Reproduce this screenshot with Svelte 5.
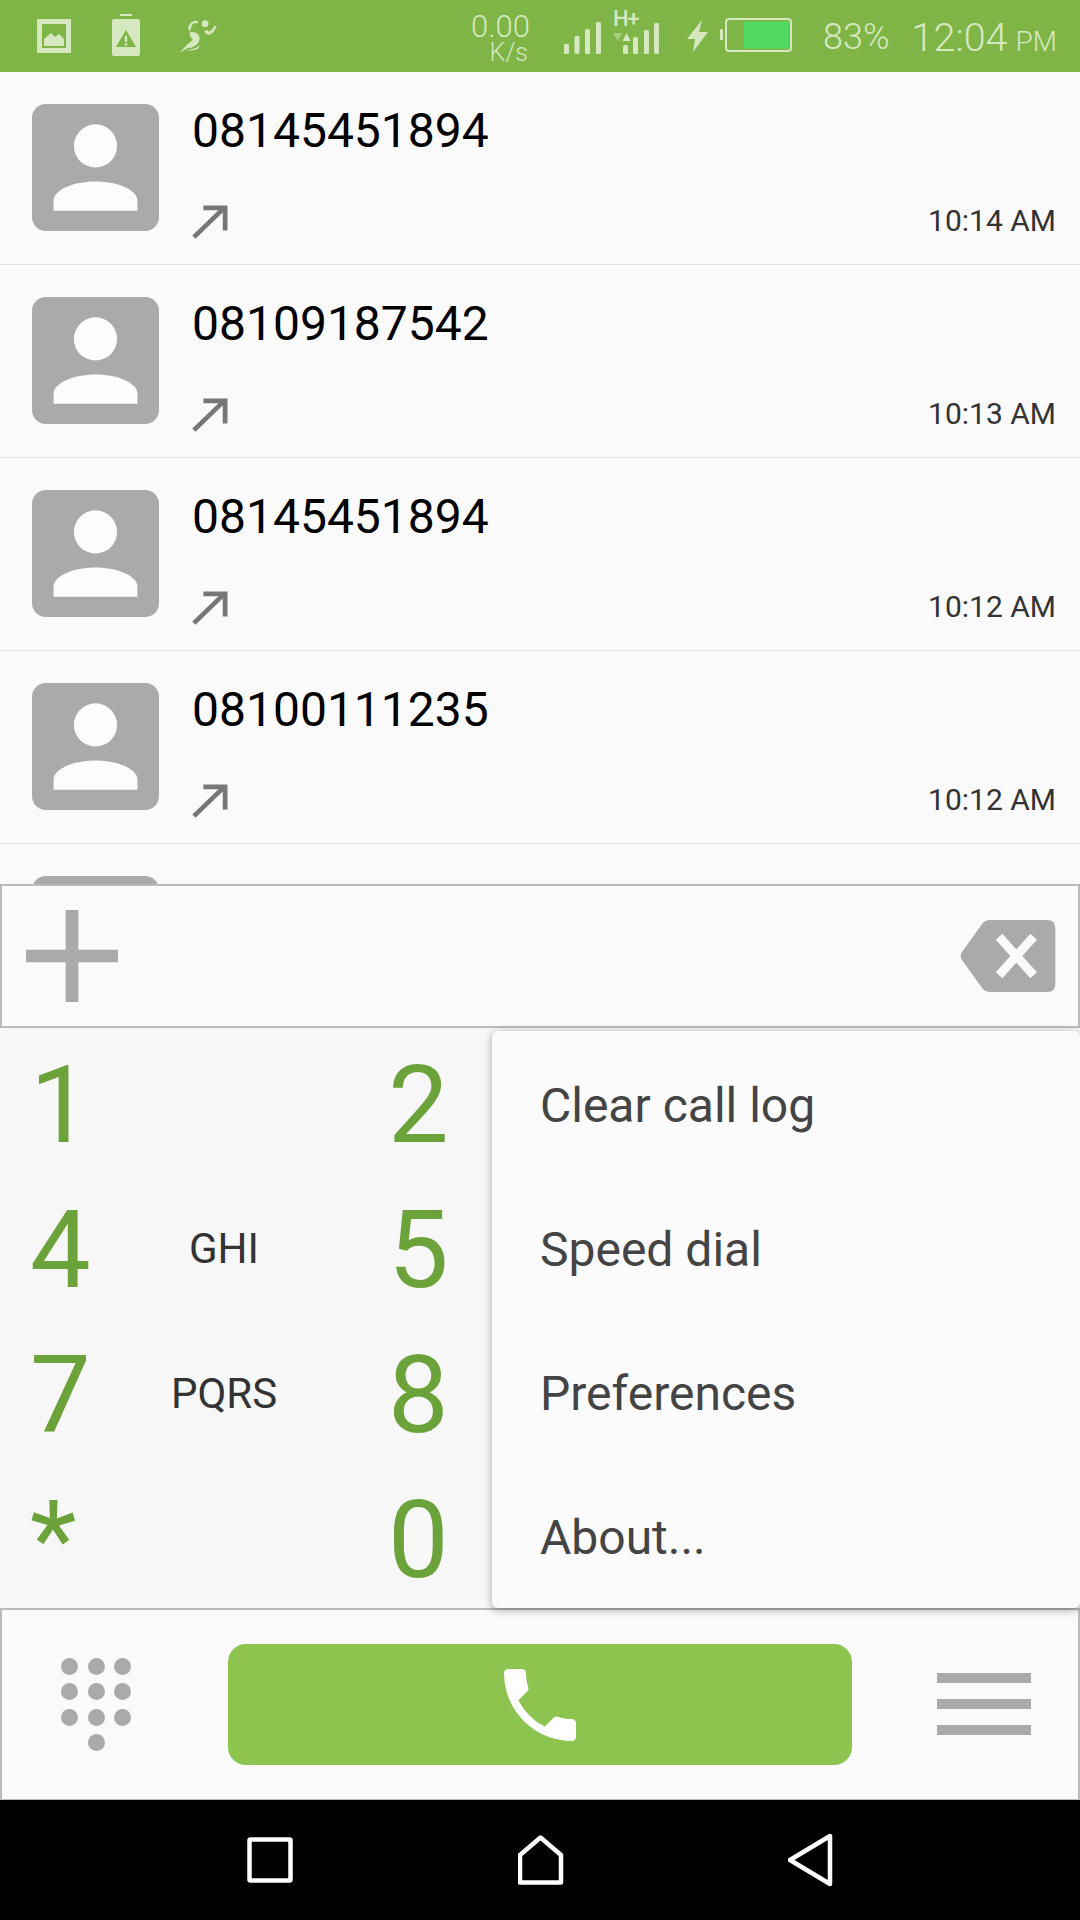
<script>
  const calls = [
    { num: '08145451894', time: '10:14 AM' },
    { num: '08109187542', time: '10:13 AM' },
    { num: '08145451894', time: '10:12 AM' },
    { num: '08100111235', time: '10:12 AM' },
    { num: '', time: '' }
  ]
  const keys = [
    { d: '1', l: '' }, { d: '2', l: '' },
    { d: '4', l: 'GHI' }, { d: '5', l: '' },
    { d: '7', l: 'PQRS' }, { d: '8', l: '' },
    { d: '*', l: '' }, { d: '0', l: '' }
  ]
  const menu = ['Clear call log', 'Speed dial', 'Preferences', 'About...']
  const dots = [0, 1, 2, 3, 4, 5, 6, 7, 8]
</script>

<div class="page">
  <header class="status">
    <svg class="ic-image" width="34" height="34" viewBox="0 0 34 34">
      <path d="M0 0H34V34H0ZM5 5V29H29V5Z" fill-rule="evenodd" />
      <path d="M7 27V20L14 14L18 18L22 15L27 20V27Z" />
    </svg>
    <svg class="ic-alert" width="28" height="42" viewBox="0 0 28 42">
      <rect x="8" y="0" width="12" height="2" />
      <path fill-rule="evenodd" d="M2 5H26Q28 5 28 7V40Q28 42 26 42H2Q0 42 0 40V7Q0 5 2 5ZM14 16L4 33H24ZM12.8 22H15.2V28H12.8ZM12.8 29.3H15.2V31.5H12.8Z" />
    </svg>
    <svg class="ic-run" width="39" height="34" viewBox="0 0 40 36">
      <circle cx="27" cy="5" r="3.6" />
      <path d="M9 9C11 3 16 0 20 3L18 5C15 3 13 6 12 10L11 14Z" />
      <path d="M29 11C30 15 33 14 37 7L39 8C36 16 30 20 26 13Z" />
      <path d="M11 14C18 13 22 17 21 22C20 28 13 31 8 31L0 36L8 27L14 22C12 20 10 17 11 14Z" />
      <path d="M7 33C13 32 19 31 22 27L20 31C17 33 12 34 7 33Z" />
    </svg>

    <div class="speed"><span>0.00</span><small>K/s</small></div>

    <svg class="bars" width="37" height="32" viewBox="0 0 37 32">
      <rect x="0" y="22" width="5" height="10" rx="1.5" />
      <rect x="10.5" y="14" width="5" height="18" rx="1.5" />
      <rect x="21" y="7" width="5" height="25" rx="1.5" />
      <rect x="32" y="0" width="5" height="32" rx="1.5" />
    </svg>
    <div class="net">
      <span class="hplus">H+</span>
      <svg width="46" height="42" viewBox="0 0 46 42">
        <path d="M0 21H9L4.500 29Z" opacity="0.45" />
        <path d="M9.500 29L13.500 21L17.500 29Z" />
        <rect x="10" y="33" width="5" height="9" rx="1.5" />
        <rect x="20" y="25" width="5" height="17" rx="1.5" />
        <rect x="31" y="18" width="5" height="24" rx="1.5" />
        <rect x="41" y="11" width="5" height="31" rx="1.5" />
      </svg>
    </div>
    <svg class="bolt" width="21" height="32" viewBox="0 0 21 32">
      <path d="M15 0L0 19H8L6 32L21 12H12Z" />
    </svg>
    <svg class="battery" width="72" height="34" viewBox="0 0 72 34">
      <rect x="0" y="11" width="3" height="11" rx="1" />
      <rect x="6" y="1" width="65" height="32" rx="3" class="shell" />
      <rect x="24" y="3.500" width="45" height="27" class="charge" />
    </svg>
    <span class="pct">83%</span>
    <span class="clock">12:04</span>
    <span class="ampm">PM</span>
  </header>

  <section class="log">
    {#each calls as c}
      <div class="call">
        <svg class="avatar" viewBox="0 0 100 100">
          <rect width="100" height="100" rx="11" fill="#aaaaaa" />
          <circle cx="50" cy="33" r="17" fill="#fcfcfc" />
          <path d="M17 84V76C17 68 32 61 50 61S83 68 83 76V84Z" fill="#fcfcfc" />
        </svg>
        <div class="info">
          <div class="num">{c.num}</div>
          <div class="meta">
            <svg width="36" height="34" viewBox="0 0 38 36" class="arrow">
              <path d="M2 34L34 3M12 3H35V27" />
            </svg>
            <span class="time">{c.time}</span>
          </div>
        </div>
      </div>
    {/each}
  </section>

  <section class="entry">
    <svg width="92" height="92" viewBox="0 0 94 94">
      <path d="M40.500 0H53.500V40.500H94V53.500H53.500V94H40.500V53.500H0V40.500H40.500Z" fill="#aaaaaa" />
    </svg>
    <svg width="96" height="72" viewBox="0 0 96 73">
      <path d="M30 0H88Q96 0 96 8V65Q96 73 88 73H30Q24 73 21 68L1 40Q-1 36.500 1 33L21 5Q24 0 30 0Z" fill="#aaaaaa" />
      <path d="M39 17L74 56M74 17L39 56" stroke="#fafafa" stroke-width="9" />
    </svg>
  </section>

  <section class="pad">
    {#each keys as k}
      <div class="key">
        <span class="digit">{k.d}</span>
        <span class="letters">{k.l}</span>
      </div>
    {/each}
  </section>

  <section class="actions">
    <div class="dial-toggle">
      {#each dots as d}<i></i>{/each}
      <i class="last"></i>
    </div>
    <div class="call-btn">
      <svg width="72" height="72" viewBox="3 3 18 18">
        <path d="M6.620 10.790c1.440 2.830 3.760 5.140 6.590 6.590l2.200-2.200c.27-.27.67-.36 1.020-.24 1.120.37 2.330.57 3.570.57.55 0 1 .45 1 1V20c0 .55-.45 1-1 1-9.390 0-17-7.610-17-17 0-.55.45-1 1-1h3.500c.55 0 1 .45 1 1 0 1.250.2 2.450.57 3.570.11.35.03.74-.25 1.020l-2.200 2.200z" fill="#fff" />
      </svg>
    </div>
    <div class="burger"><i></i><i></i><i></i></div>
  </section>

  <nav class="sysnav">
    <svg width="46" height="46" viewBox="0 0 46 46">
      <rect x="2.500" y="2.500" width="41" height="41" rx="1" />
    </svg>
    <svg width="46" height="50" viewBox="0 0 46 50">
      <path d="M2 47.500V20L22.500 2.500L43 20V47.500Z" />
    </svg>
    <svg class="back" width="46" height="54" viewBox="0 0 46 54">
      <path d="M2 27L42 3V51Z" />
    </svg>
  </nav>

  <div class="menu">
    {#each menu as m}
      <div class="item">{m}</div>
    {/each}
  </div>
</div>

<style>
  :global(body) { margin: 0; background: #fafafa; }

  .page {
    position: relative;
    width: 1080px;
    height: 1920px;
    display: grid;
    grid-template-rows: 72px 812px 144px 580px 192px 120px;
    overflow: hidden;
    background: #fafafa;
    font-family: Roboto, "Noto Sans", sans-serif;
  }

  .status {
    display: flex;
    align-items: flex-start;
    background: #7fb446;
    color: #d6e8bf;
    fill: #d6e8bf;
    font-weight: 300;
  }
  .ic-image { margin: 19px 0 0 37px; }
  .ic-alert { margin: 14px 0 0 41px; }
  .ic-run { margin: 19px 0 0 39px; }
  .speed {
    width: 60px;
    margin: 12px 0 0 252px;
    display: flex;
    flex-direction: column;
    align-items: flex-end;
    font-size: 31px;
    line-height: 29px;
  }
  .speed small { font-size: 25px; line-height: 24px; margin-right: 2px; }
  .bars { margin: 22px 0 0 34px; }
  .net { position: relative; margin: 12px 0 0 12px; width: 46px; }
  .hplus {
    position: absolute;
    left: 0;
    top: -2px;
    font-size: 22px;
    line-height: 18px;
    font-weight: 500;
    letter-spacing: -1px;
  }
  .bolt { margin: 20px 0 0 28px; }
  .battery { margin: 18px 0 0 12px; }
  .shell { fill: none; stroke: #d6e8bf; stroke-width: 2; }
  .charge { fill: #52d964; }
  .pct { margin: 17px 0 0 31px; font-size: 36px; line-height: 40px; }
  .clock { margin: 14px 0 0 22px; font-size: 39.500px; line-height: 48px; }
  .ampm { margin: 24px 0 0 8px; font-size: 28px; line-height: 36px; }

  .log { overflow: hidden; }
  .call {
    box-sizing: border-box;
    height: 193px;
    padding: 32px 24px 0 32px;
    display: flex;
    gap: 33px;
    border-bottom: 1px solid #e0e0e0;
  }
  .avatar { width: 127px; height: 127px; flex: none; }
  .info { flex: 1; }
  .num { font-size: 48px; line-height: 56px; color: #000; margin-top: -1px; height: 56px; }
  .meta {
    display: flex;
    justify-content: space-between;
    align-items: flex-end;
    margin-top: 40px;
    height: 40px;
  }
  .arrow { fill: none; stroke: #777; stroke-width: 5; }
  .time { font-size: 30px; line-height: 36px; color: #333; }

  .entry {
    box-sizing: border-box;
    border: 2px solid #bbb;
    background: #fafafa;
    padding: 0 22px 0 24px;
    display: flex;
    align-items: center;
    justify-content: space-between;
  }

  .pad {
    background: #f7f7f7;
    display: grid;
    grid-template-columns: 362px 360px;
    grid-auto-rows: 145px;
    padding-top: 5px;
    overflow: hidden;
  }
  .key { display: grid; grid-template-columns: 146px 152px; align-items: center; }
  .key:nth-child(odd) { padding-left: 2px; }
  .key:nth-child(even) { margin-left: -2px; }
  .digit { padding-left: 28px; font-size: 108px; line-height: 145px; color: #6ba33a; }
  .letters { text-align: center; font-size: 42px; color: #333; margin-bottom: 5px; }

  .actions {
    box-sizing: border-box;
    border: 2px solid #bbb;
    border-bottom-width: 1px;
    background: #fafafa;
    display: flex;
    align-items: center;
  }
  .dial-toggle {
    margin-left: 59px;
    width: 70px;
    display: grid;
    grid-template-columns: repeat(3, 17px);
    column-gap: 9.500px;
    row-gap: 8.500px;
  }
  .dial-toggle i { width: 17px; height: 17px; border-radius: 50%; background: #aaa; }
  .dial-toggle i.last { grid-column: 2; }
  .call-btn {
    margin-left: 97px;
    width: 624px;
    height: 121px;
    border-radius: 18px;
    background: #8cc44f;
    display: flex;
    align-items: center;
    justify-content: center;
  }
  .burger { margin: 0 0 2px 85px; width: 94px; display: flex; flex-direction: column; gap: 16px; }
  .burger i { height: 10px; background: #aaa; }

  .sysnav {
    background: #000;
    display: flex;
    align-items: center;
    padding-left: 247px;
    gap: 225px;
    fill: none;
    stroke: #fff;
    stroke-width: 4.500;
    stroke-linejoin: round;
  }
  .back { margin-left: -1px; }

  .menu {
    position: absolute;
    left: 492px;
    top: 1031px;
    width: 588px;
    height: 577px;
    box-sizing: border-box;
    border-radius: 6px;
    background: #fbfbfb;
    box-shadow: 0 2px 8px rgba(0, 0, 0, 0.35);
    display: grid;
    grid-auto-rows: 144px;
  }
  .item {
    padding: 4px 0 0 48px;
    display: flex;
    align-items: center;
    font-size: 48px;
    color: #444;
  }
</style>
